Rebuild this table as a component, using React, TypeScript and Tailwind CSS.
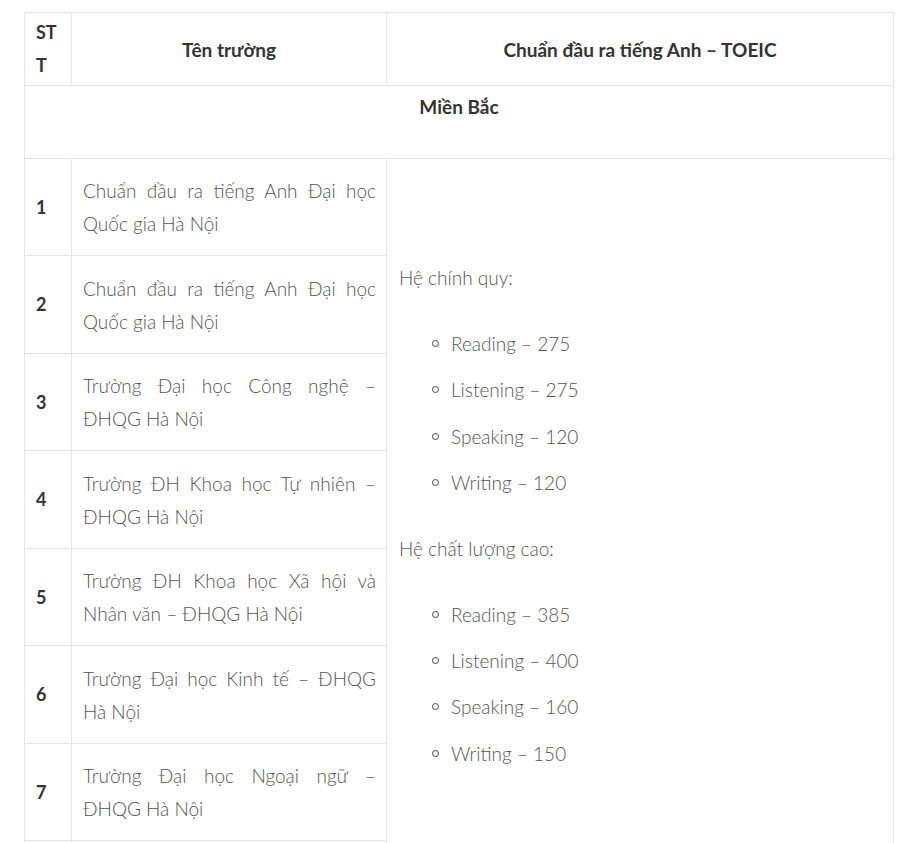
import React from "react";

const rows: { n: string; l1: string; l2: string }[] = [
  { n: "1", l1: "Chuẩn đầu ra tiếng Anh Đại học", l2: "Quốc gia Hà Nội" },
  { n: "2", l1: "Chuẩn đầu ra tiếng Anh Đại học", l2: "Quốc gia Hà Nội" },
  { n: "3", l1: "Trường Đại học Công nghệ –", l2: "ĐHQG Hà Nội" },
  { n: "4", l1: "Trường ĐH Khoa học Tự nhiên –", l2: "ĐHQG Hà Nội" },
  { n: "5", l1: "Trường ĐH Khoa học Xã hội và", l2: "Nhân văn – ĐHQG Hà Nội" },
  { n: "6", l1: "Trường Đại học Kinh tế – ĐHQG", l2: "Hà Nội" },
  { n: "7", l1: "Trường Đại học Ngoại ngữ –", l2: "ĐHQG Hà Nội" },
];

const Bullet = ({ children }: { children: React.ReactNode }) => (
  <li className="flex items-center h-[33px]">
    <span className="ml-[33px] mr-[12px] inline-block w-[7px] h-[7px] rounded-full border-[1.5px] border-[#444]" />
    <span>{children}</span>
  </li>
);

export default function App() {
  const font = { fontFamily: "Lato, 'Noto Sans', sans-serif" };
  return (
    <div className="bg-white w-[908px] h-[843px] overflow-hidden pt-[12px] pl-[24px]" style={font}>
      <table className="table-fixed border-collapse w-[869px] text-[19px] leading-[33px]">
        <colgroup>
          <col className="w-[47px]" />
          <col className="w-[315px]" />
          <col className="w-[507px]" />
        </colgroup>
        <tbody>
          <tr className="h-[73px]">
            <td className="border border-[#e6e6e6] px-[11px] align-middle font-bold text-[18px] text-[#333]">
              ST
              <br />T
            </td>
            <td className="border border-[#e6e6e6] px-[11px] align-middle text-center font-bold text-[#333]">
              Tên trường
            </td>
            <td className="border border-[#e6e6e6] px-[11px] align-middle text-center font-bold text-[#333]">
              Chuẩn đầu ra tiếng Anh – TOEIC
            </td>
          </tr>
          <tr className="h-[73px]">
            <td
              colSpan={3}
              className="border border-[#e6e6e6] pt-[4px] align-top text-center font-bold text-[#333]"
            >
              Miền Bắc
            </td>
          </tr>
          {rows.map((r, i) => (
            <tr key={r.n} className={i % 2 === 0 ? "h-[97px]" : "h-[98px]"}>
              <td className="border border-[#e6e6e6] px-[11px] align-middle font-bold text-[18px] text-[#333]">
                {r.n}
              </td>
              <td className="border border-[#e6e6e6] pl-[11px] pr-[10px] align-middle font-light text-[#555]">
                <div className="text-justify [text-align-last:justify]">{r.l1}</div>
                <div>{r.l2}</div>
              </td>
              {i === 0 && (
                <td
                  rowSpan={8}
                  className="border border-[#e6e6e6] pl-[12px] pr-[11px] pt-[102px] align-top font-light text-[#555]"
                >
                  <p>Hệ chính quy:</p>
                  <ul className="mt-[33px] flex flex-col gap-[13.3px]">
                    <Bullet>Reading – 275</Bullet>
                    <Bullet>Listening – 275</Bullet>
                    <Bullet>Speaking – 120</Bullet>
                    <Bullet>Writing – 120</Bullet>
                  </ul>
                  <p className="mt-[33px]">Hệ chất lượng cao:</p>
                  <ul className="mt-[33px] flex flex-col gap-[13.3px]">
                    <Bullet>Reading – 385</Bullet>
                    <Bullet>Listening – 400</Bullet>
                    <Bullet>Speaking – 160</Bullet>
                    <Bullet>Writing – 150</Bullet>
                  </ul>
                </td>
              )}
            </tr>
          ))}
          <tr className="h-[97px]">
            <td className="border border-[#e6e6e6]"></td>
            <td className="border border-[#e6e6e6]"></td>
          </tr>
        </tbody>
      </table>
    </div>
  );
}
